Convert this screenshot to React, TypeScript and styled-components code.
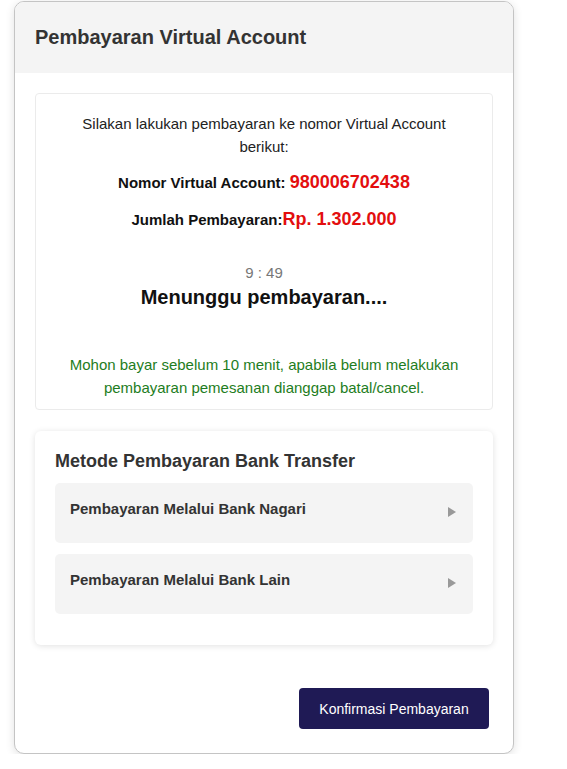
import React from 'react';
import styled, { createGlobalStyle } from 'styled-components';

const GlobalStyle = createGlobalStyle`
body {
  margin: 0;
  background: #fff;
  font-family: "Liberation Sans", Arial, sans-serif;
  color: #333;
}
`

const Card = styled.div`
width: 500px;
box-sizing: border-box;
margin: 1px 0 0 14px;
border: 1px solid #c4c4c4;
border-radius: 10px;
box-shadow: 0 2px 10px rgba(0, 0, 0, 0.12);
overflow: hidden;
background: #fff;
`

const CardHeader = styled.header`
background: #f4f4f4;
padding: 24px 20px;
h2 {
  margin: 0;
  font-size: 20px;
  line-height: 23px;
  font-weight: bold;
  color: #333;
}
`

const CardBody = styled.div`
padding: 20px 20px 20px;
`

const InfoBox = styled.section`
border: 1px solid #ebebeb;
border-radius: 4px;
padding: 18px 20px 10px;
text-align: center;
`

const Intro = styled.p`
margin: 0;
font-size: 15px;
line-height: 23px;
color: #222;
`

const InfoLine = styled.div<{ $gap: number }>`
margin-top: ${p => p.$gap}px;
height: 23px;
line-height: 23px;
font-size: 15px;
font-weight: bold;
color: #111;
`

const Red = styled.span`
color: #e30e0e;
font-size: 18px;
font-weight: bold;
`

const Timer = styled.div`
margin-top: 30px;
font-size: 15px;
line-height: 23px;
color: #777;
`

const Waiting = styled.h3`
margin: 0;
font-size: 20px;
line-height: 26px;
font-weight: bold;
color: #111;
`

const Warning = styled.p`
margin: 43px 0 0;
font-size: 15px;
line-height: 23px;
color: #1e7d22;
`

const MethodCard = styled.section`
margin-top: 21px;
padding: 20px 20px 31px;
border-radius: 6px;
box-shadow: 0 1px 6px rgba(0, 0, 0, 0.12);
h3 {
  margin: 0 0 11px;
  font-size: 18px;
  line-height: 21px;
  font-weight: bold;
  color: #333;
}
`

const MethodList = styled.div`
display: flex;
flex-direction: column;
gap: 11px;
`

const MethodItem = styled.div`
height: 60px;
box-sizing: border-box;
padding: 17px 17px 0 15px;
background: #f4f4f4;
border-radius: 5px;
display: flex;
justify-content: space-between;
align-items: flex-start;
font-size: 15px;
line-height: 17px;
font-weight: bold;
color: #333;
`

const Arrow = styled.span`
margin-top: 7px;
width: 0;
height: 0;
border-top: 5px solid transparent;
border-bottom: 5px solid transparent;
border-left: 8px solid #999;
`

const Footer = styled.div`
margin-top: 39px;
display: flex;
justify-content: flex-end;
`

const ConfirmButton = styled.button`
margin: 4px;
width: 190px;
height: 41px;
border: none;
border-radius: 4px;
background: #1f1a55;
color: #fff;
font-family: "Liberation Sans", Arial, sans-serif;
font-size: 14px;
cursor: pointer;
`

const methods = ['Pembayaran Melalui Bank Nagari', 'Pembayaran Melalui Bank Lain']

export default function App() {
  return (
    <>
      <GlobalStyle />
      <Card>
        <CardHeader><h2>Pembayaran Virtual Account</h2></CardHeader>
        <CardBody>
          <InfoBox>
            <Intro>Silakan lakukan pembayaran ke nomor Virtual Account<br />berikut:</Intro>
            <InfoLine $gap={13}>Nomor Virtual Account: <Red>980006702438</Red></InfoLine>
            <InfoLine $gap={14}>Jumlah Pembayaran:<Red>Rp. 1.302.000</Red></InfoLine>
            <Timer>9 : 49</Timer>
            <Waiting>Menunggu pembayaran....</Waiting>
            <Warning>Mohon bayar sebelum 10 menit, apabila belum melakukan<br />pembayaran pemesanan dianggap batal/cancel.</Warning>
          </InfoBox>
          <MethodCard>
            <h3>Metode Pembayaran Bank Transfer</h3>
            <MethodList>
              {methods.map(m => (
                <MethodItem key={m}>
                  <span>{m}</span>
                  <Arrow />
                </MethodItem>
              ))}
            </MethodList>
          </MethodCard>
          <Footer>
            <ConfirmButton>Konfirmasi Pembayaran</ConfirmButton>
          </Footer>
        </CardBody>
      </Card>
    </>
  )
}
